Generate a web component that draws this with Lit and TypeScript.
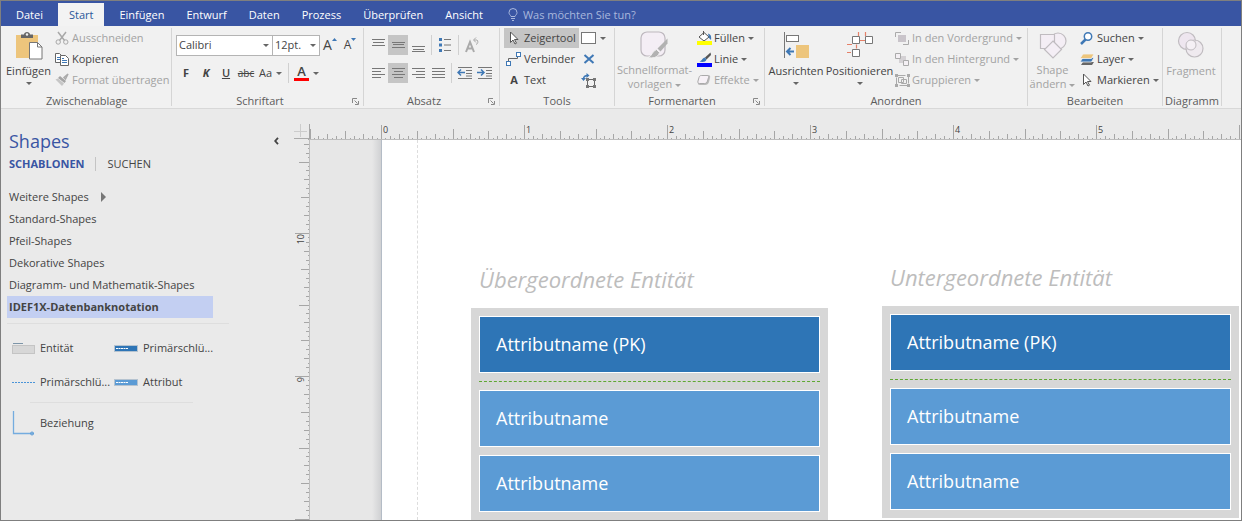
import { LitElement, html, svg, css, nothing } from "lit";
import type { TemplateResult } from "lit";
import { customElement, state } from "lit/decorators.js";
import { classMap } from "lit/directives/class-map.js";

const pic = (w: number, h: number, body: TemplateResult) =>
  html`<svg width=${w} height=${h} viewBox="0 0 ${w} ${h}" fill="none" aria-hidden="true">${body}</svg>`;

const chevron = pic(6, 3, svg`<path d="M0 0h6L3 3z" fill="currentColor"/>`);

const bars = (rows: number[][]) =>
  pic(14, 14, svg`${rows.map(([x, y, w]) => svg`<path d="M${x} ${y + 0.5}h${w}" stroke="#777"/>`)}`);

const brush = (color: string) => svg`
  <path d="M13.500 0.500L8 5.500l1.500 2L14 3z" fill="#555"/>
  <path d="M8 5.500C5 6 5.500 8.500 2.500 9.500 5.500 10.500 9 10 9.500 7.500z" fill=${color}/>`;

const icons: Record<string, TemplateResult> = {
  paste: pic(28, 30, svg`
    <path d="M1 4h22v23H1z" fill="#edc57c"/>
    <path d="M6 3.500h3C9 0 15 0 15 3.500h3V7H6z" fill="#666"/><circle cx="12" cy="3.500" r="1.200" fill="#f1f1f1"/>
    <path d="M14.500 11.500h8l4.500 4.500v12H14.500z" fill="#fff" stroke="#777"/><path d="M22.500 11.500V16H27" stroke="#777"/>`),
  cut: pic(14, 14, svg`
    <path d="M3 1l6.500 8.500M11 1L4.500 9.500" stroke="#a8a8a8" stroke-width="1.500"/>
    <circle cx="3.200" cy="11" r="2.200" stroke="#a8a8a8"/><circle cx="10.800" cy="11" r="2.200" stroke="#a8a8a8"/>`),
  copy: pic(14, 14, svg`
    <path d="M.5 1.500h4l2 2v7h-6z" fill="#fff" stroke="#666"/><path d="M2 5.500h3M2 7.500h3" stroke="#3f78b5"/>
    <path d="M5.500 3.500h5l3 3v7h-8z" fill="#fff" stroke="#666"/><path d="M7 8.500h5M7 10.500h5M7 6.500h2" stroke="#3f78b5"/>`),
  painter: pic(14, 14, svg`
    <path d="M13 1L9 4.500l1.500 1.500z" stroke="#aaa" stroke-width="1.500"/>
    <path d="M5 3l6 5-1.500 2-6.500-5z" fill="#a5a5a5"/><path d="M3 5.500L.5 6.500 7 13l2-2.500z" fill="#c6c6c6"/>`),
  cursor: pic(14, 14, svg`<path d="M3.500 1v10.500L6 9l2 4 1.500-.8L7.500 8.500H11z" fill="#fff" stroke="#555"/>`),
  connector: pic(16, 14, svg`
    <path d="M2.500 9.500V6.500h9V4" stroke="#666"/>
    <rect x=".5" y="9.500" width="4" height="4" fill="#fff" stroke="#3f78b5"/>
    <rect x="10.500" y=".5" width="4" height="4" fill="#fff" stroke="#3f78b5"/>`),
  rect: pic(15, 12, svg`<rect x=".5" y=".5" width="14" height="11" fill="#fff" stroke="#777"/>`),
  cross: pic(12, 10, svg`<path d="M1.500 1l9 8M10.500 1l-9 8" stroke="#3f78b5" stroke-width="2"/>`),
  points: pic(16, 15, svg`
    <path d="M2.500 6C2.500 3 4 2.500 7 2.500" stroke="#3f78b5" stroke-width="1.500"/>
    <path d="M0 5h5L2.500 8zM5.500 0l3 2.500-3 2.500z" fill="#3f78b5"/>
    <rect x="6.500" y="6.500" width="7" height="7" stroke="#666"/>
    <path d="M5 5h3v3H5zM12 5h3v3h-3zM5 12h3v3H5zM12 12h3v3h-3z" fill="#777"/>`),
  quick: pic(30, 30, svg`
    <rect x="1" y="1" width="24" height="24" rx="6" fill="#f4eef5" stroke="#bdb8be" stroke-width="1.200"/>
    <path d="M27.500 7.500v5l-7 8-3-3z" fill="#b2b2b2"/>
    <path d="M16.500 18.500l3 3C18 27 12 27.500 8 26.500c4-1 4-6.500 8.500-8z" fill="#b2b2b2" stroke="#f1f1f1"/>`),
  fill: pic(15, 14, svg`
    <path d="M6.500 0v4M2 6l5-4.500 5 4.500-5 4z" stroke="#555" fill="#fff"/>
    <path d="M11 2.500c3 1 3.500 3 3 6.500l-2-2z" fill="#3f78b5"/><path d="M0 10h15v4H0z" fill="#ff0"/>`),
  line: pic(15, 15, svg`${brush("#3f78b5")}<path d="M0 11h15v4H0z" fill="#00f"/>`),
  effects: pic(14, 12, svg`
    <path d="M4.500 1h6.500c2 0 2.500 1 2 3l-1 4c-.5 2-2 3-4 3H3C1 11 .500 10 1 8" fill="#bbb"/>
    <path d="M4.500 1.500h5.500c1.500 0 2 .5 1.500 2L10.500 7C10 8.500 9 9.500 7.500 9.500H2.500C1 9.500.5 8.500 1 7l1-3.500C2.500 2 3 1.500 4.500 1.500z" fill="#f6f1f6" stroke="#aaa"/>`),
  align: pic(26, 28, svg`
    <path d="M1.500 1v26" stroke="#777"/><rect x="3.500" y="4.500" width="12" height="6" fill="#fff" stroke="#777"/>
    <path d="M13 14h13v13H13z" fill="#edc57c"/>
    <path d="M4 20.500h7M7.500 17L4 20.500 7.500 24" stroke="#3f78b5" stroke-width="2"/>`),
  position: pic(28, 28, svg`
    <path d="M12.500 1v4M19.500 1v4M14 9.500h5M10.500 13.500v4M1 13.500h5M1 21.500h4" stroke="#e58068" stroke-width="1.200"/>
    <path d="M6.500 5.500h7v7h-7zM19.500 5.500h7v7h-7zM6.500 18.500h7v7h-7z" fill="#fff" stroke="#777"/>`),
  front: pic(14, 13, svg`
    <path d="M.5 5V.5H6M13.500 8v4.500H8" stroke="#aaa"/><path d="M3 3h8v7H3z" fill="#c9c4ca"/>`),
  back: pic(14, 13, svg`
    <path d="M4 3h7v7H4z" fill="#d4d1d4"/>
    <path d="M.5.5h5v5h-5zM8.500 7.500h5v5h-5z" fill="#f4f0f4" stroke="#aaa"/>`),
  group: pic(15, 13, svg`
    <path d="M1.500 1.500h12v10h-12z" stroke="#aaa" stroke-dasharray="9 2"/>
    <path d="M3.500 3.500h5v5h-5zM6.500 5.500h5v4h-5z" stroke="#aaa"/>
    <path d="M0 0h3v3H0zM12 0h3v3h-3zM0 10h3v3H0zM12 10h3v3h-3z" fill="#aaa"/>`),
  shape: pic(28, 28, svg`
    <circle cx="19" cy="10" r="8" fill="#f4eef5" stroke="#c0bcc0" stroke-width="1.200"/>
    <path d="M1.500 3.500h14v14h-14z" fill="#f4eef5" stroke="#c0bcc0" stroke-width="1.200"/>
    <path d="M14 10l8.500 8.500L14 27l-8.500-8.500z" fill="#f4eef5" stroke="#c0bcc0" stroke-width="1.200"/>`),
  search: pic(14, 13, svg`
    <circle cx="8" cy="4.500" r="3.700" fill="#fff" stroke="#3f78b5" stroke-width="1.500"/>
    <path d="M5.500 7.500L1 12" stroke="#3f78b5" stroke-width="2.500"/>`),
  layer: pic(14, 13, svg`
    <path d="M1 12l2-3h11l-2 3z" fill="#666"/><path d="M0 9l3-4.500h11L11.500 9z" fill="#3f78b5" stroke="#f1f1f1" stroke-width=".8"/>
    <path d="M0 5.500L3 1h11l-2.500 4.500z" fill="#edc57c" stroke="#f1f1f1" stroke-width=".8"/>`),
  fragment: pic(28, 28, svg`
    <circle cx="10" cy="10" r="8.500" fill="#eee6ef" stroke="#c0bcc0" stroke-width="1.200"/>
    <circle cx="17.500" cy="17.500" r="8.500" fill="#eee6ef" fill-opacity=".6" stroke="#c0bcc0" stroke-width="1.200"/>
    <circle cx="14" cy="14" r="5" fill="#f5f0f5" stroke="#c0bcc0"/>`),
  top: bars([[1, 1, 13], [2, 4, 11], [1, 7, 13]]),
  middle: bars([[1, 4, 13], [2, 6, 11], [1, 9, 13]]),
  bottom: bars([[1, 8, 13], [2, 11, 11], [1, 13, 13]]),
  left: bars([[1, 2, 13], [1, 5, 9], [1, 8, 13], [1, 11, 9]]),
  center: bars([[1, 2, 13], [3, 5, 9], [1, 8, 13], [3, 11, 9]]),
  right: bars([[1, 2, 13], [5, 5, 9], [1, 8, 13], [5, 11, 9]]),
  justify: bars([[1, 2, 13], [1, 5, 13], [1, 8, 13], [1, 11, 13]]),
  bullets: pic(14, 14, svg`
    <path d="M1 0h3v3H1zM1 5.500h3v3H1zM1 11h3v3H1z" fill="#3f78b5"/>
    <path d="M6 1.500h7M6 7h7M6 12.500h7" stroke="#777"/>`),
  rotate: pic(14, 16, svg`
    <path d="M1 15L5 5 9 15M2.500 11.500h5" stroke="#aaa" stroke-width="2"/>
    <path d="M9 3h3c1.500 1 1 4-1 4.500M11 .5L8.500 3 11 5.500" stroke="#aaa"/>`),
  outdent: pic(16, 14, svg`
    <path d="M1 1.500h14M9 4.500h6M9 7.500h6M1 12.500h14M9 10h6" stroke="#777"/>
    <path d="M1 6.500h7M4 3.500l-3 3 3 3" stroke="#3f78b5" stroke-width="1.500"/>`),
  indent: pic(16, 14, svg`
    <path d="M1 1.500h14M9 4.500h6M9 7.500h6M1 12.500h14M9 10h6" stroke="#777"/>
    <path d="M0 6.500h6M4 3.500l3 3-3 3" stroke="#3f78b5" stroke-width="1.500"/>`),
  launcher: pic(7, 7, svg`<path d="M.5 5V.5H5M2.500 2.500l3 3M6.500 3v3.500H3" stroke="#888"/>`),
  bulb: pic(10, 13, svg`
    <path d="M3 8.500C2.500 7 1 6.500 1 4.500a4 4 0 0 1 8 0c0 2-1.500 2.500-2 4zM3 10.500h4M4 12.500h2" stroke="#a9b8dd"/>`),
};

interface Command { label: string; icon?: string; glyph?: string; menu?: boolean; off?: boolean; on?: boolean; }

/** One inch on the ruler, in pixels. */
const INCH = 143;

function ticks(origin: number, to: number) {
  const out: { at: number; size: number; inch: number | null }[] = [];
  for (let n = Math.ceil((-origin / INCH) * 32); ; n++) {
    const at = Math.round(origin + (n * INCH) / 32);
    if (at > to) return out;
    const size = n % 32 === 0 ? 14 : n % 16 === 0 ? 10 : n % 8 === 0 ? 8 : n % 4 === 0 ? 5 : n % 2 === 0 ? 3 : 1;
    out.push({ at, size, inch: n % 32 === 0 && at + 16 < to ? n / 32 : null });
  }
}

@customElement("app-root")
export class AppRoot extends LitElement {
  static styles = css`
    :host {
      display: grid;
      grid-template-rows: auto auto 1fr;
      min-height: 100vh;
      box-sizing: border-box;
      border: 1px solid #7f7f7f;
      background: #eaeaea;
      color: #444;
      font: 11px/16px "Open Sans", "Noto Sans", sans-serif;
      overflow: hidden;
    }
    * { box-sizing: border-box; }
    svg { display: block; flex: none; }
    button, select, input { font: inherit; color: inherit; margin: 0; padding: 0; border: 0; background: none; }
    button { display: flex; align-items: center; white-space: nowrap; }
    button:disabled { color: #a3a3a3; }

    .tabs { display: flex; height: 25px; padding: 2px 0 0 4px; background: #3955a3; color: #fff; }
    .tab { padding: 0 11px; }
    .tab.active { background: #f3f3f3; color: #2b579a; margin: 0 4px; }
    .ask { display: flex; align-items: center; gap: 5px; padding-left: 14px; flex: 1; }
    .ask input { width: 160px; outline: none; }
    .ask input::placeholder { color: #a9b8dd; opacity: 1; }

    .ribbon {
      display: grid;
      grid-template-columns: 171px 192px 136px 115px 150px 263px 135px 59px;
      padding: 2px 0;
      background: #f1f1f1;
      border-bottom: 1px solid #d8d8d8;
    }
    .group { display: grid; grid-template-rows: 63px 15px; border-right: 1px solid #d5d5d5; }
    .body { display: flex; }
    .body.indent { padding-left: 4px; }
    .body.stack { flex-direction: column; gap: 8px; padding: 7px 0 0 4px; }
    .caption { display: flex; color: #5c5c5c; line-height: 19px; }
    .caption span { flex: 1; text-align: center; }
    .caption button { width: 15px; padding-top: 6px; justify-content: center; }
    .column { display: grid; grid-template-rows: repeat(3, 20px); gap: 1px; align-content: start; justify-items: start; }
    .cmd { gap: 3px; height: 20px; padding: 0 3px; }
    .cmd .icon, .cmd .glyph { width: 14px; display: flex; justify-content: center; }
    .glyph { font-weight: 700; }
    .on { background: #c5c5c5; }
    .big { flex-direction: column; padding-top: 3px; line-height: 14px; text-align: center; }
    .big .icon { height: 33px; }
    .big .label { white-space: pre; }
    .big > svg { margin-top: 4px; }
    .big .label svg { display: inline-block; vertical-align: middle; }
    .w46 { width: 47px; } .w48 { width: 49px; } .w56 { width: 56px; }
    .w62 { width: 62px; } .w64 { width: 65px; } .w76 { width: 79px; }
    .row { display: flex; height: 20px; align-items: center; }
    .tool { width: 20px; height: 20px; justify-content: center; }
    .tool.wide { width: 29px; gap: 4px; }
    .bar { width: 1px; height: 20px; margin: 0 3px; background: #d0d0d0; }
    .combo { position: relative; display: flex; align-items: center; height: 21px; background: #fff; border: 1px solid #b4b4b4; }
    .combo.size { margin-left: -1px; }
    .combo select { appearance: none; width: 95px; height: 19px; padding-left: 2px; outline: none; }
    .combo.size select { width: 46px; }
    .combo svg { position: absolute; right: 3px; pointer-events: none; }
    svg { color: #666; }
    :disabled svg { color: #a3a3a3; }
    .b { font-weight: 700; } .i { font-weight: 700; font-style: italic; } .u { font-weight: 600; text-decoration: underline; }
    .s { text-decoration: line-through; font-size: 10px; }
    .grow { font-size: 14px; } .shrink { font-size: 12px; }
    .grow svg, .shrink svg { align-self: flex-start; margin-top: 3px; color: #3f78b5; }
    .swatch { border-bottom: 3px solid #f00; width: 15px; line-height: 13px; font-size: 13px; font-weight: 600; text-align: center; }

    .work { display: grid; grid-template-columns: 293px 15px 1fr; grid-template-rows: 30px 1fr; }
    .shapes { grid-row: 1 / 3; padding: 20px 0 0 6px; }
    .head { display: flex; justify-content: space-between; align-items: center; padding: 0 15px 0 2px; height: 24px; }
    h1 { margin: 0; font-size: 18px; font-weight: 400; line-height: 24px; color: #3955a3; }
    .switch { display: flex; height: 21px; padding: 1px 0 0 2px; }
    .switch .current { color: #3955a3; font-weight: 700; }
    .switch .rule { width: 1px; height: 14px; background: #c4c4c4; margin: 3px 11px; }
    .stencils { list-style: none; margin: 12px 0 0; padding: 0; width: 206px; }
    .stencils button { width: 100%; height: 22px; padding-left: 2px; gap: 12px; text-align: left; }
    .stencils .chosen { background: #c3cff2; font-weight: 700; }
    .divider { height: 1px; margin: 5px 65px 0 0; background: #dedede; }
    .divider.short { width: 163px; margin: 3px 0 0 23px; }
    .masters { display: grid; grid-template-columns: 102px 102px; grid-auto-rows: 34px; padding: 7px 0 0 5px; }
    .masters.last { padding-top: 3px; }
    .masters button { gap: 5px; }

    .corner, .ruler { display: flex; align-items: flex-end; overflow: hidden; }
    .ruler.side { align-items: flex-start; }
    .ruler { min-width: 0; contain: size; }
    .numeral { font-size: 9px; fill: #444; }
    .canvas {
      position: relative; display: flex; overflow: hidden; padding-left: 71px;
      background: linear-gradient(90deg, #e7e7e7 0, #e7e7e7 62px, #d0d1d3 71px);
      border-left: 1px solid #bdbdbd; border-top: 1px solid #bdbdbd;
    }
    .sheet { flex: 1; background: #fff; border-left: 1px solid #b4bcc6; padding-left: 35px; }
    .margin { height: 100%; width: 1px; border-left: 1px dashed #ddd; }
    .entity { position: absolute; width: 357px; margin: 0; }
    .parent { left: 161px; top: 124px; }
    .child { left: 572px; top: 122px; }
    figcaption { padding-left: 8px; font-size: 22px; line-height: 30px; font-style: italic; color: #bdbdbd; }
    .box { margin-top: 14px; padding: 8px; background: #d7d7d7; }
    .attr {
      height: 57px; padding: 0 16px 2px; display: flex; align-items: center; border: 1px solid #fff;
      background: #5b9bd5; color: #fff; font-size: 18px; line-height: 24px;
    }
    .attr.key { background: #2e75b6; }
    .attr + .attr { margin-top: 8px; }
    .keyline { border-top: 1px dashed #5fa832; margin: 8px 0; }
  `;

  @state() private view = { w: window.innerWidth, h: window.innerHeight };

  private measure = () => { this.view = { w: window.innerWidth, h: window.innerHeight }; };

  connectedCallback() {
    super.connectedCallback();
    window.addEventListener("resize", this.measure);
  }

  disconnectedCallback() {
    window.removeEventListener("resize", this.measure);
    super.disconnectedCallback();
  }

  private small(c: Command) {
    return html`<button class=${classMap({ cmd: true, on: !!c.on })} ?disabled=${!!c.off}>
      ${c.icon ? html`<span class="icon">${icons[c.icon]}</span>` : nothing}
      ${c.glyph ? html`<span class="glyph">${c.glyph}</span>` : nothing}
      <span>${c.label}</span>${c.menu ? chevron : nothing}
    </button>`;
  }

  private big(width: string, icon: string, label: string, menu: "below" | "inline" | "none", off = false) {
    return html`<button class="big ${width}" ?disabled=${off}>
      <span class="icon">${icons[icon]}</span>
      <span class="label">${label}${menu === "inline" ? html` ${chevron}` : nothing}</span>
      ${menu === "below" ? chevron : nothing}
    </button>`;
  }

  private tool(icon: string, name: string, on = false, off = false) {
    return html`<button class=${classMap({ tool: true, on })} aria-label=${name} ?disabled=${off}>${icons[icon]}</button>`;
  }

  private group(label: string, body: TemplateResult, launcher = false) {
    return html`<section class="group" aria-label=${label}>${body}
      <div class="caption"><span>${label}</span>${launcher ? html`<button aria-label="${label} öffnen">${icons.launcher}</button>` : nothing}</div>
    </section>`;
  }

  private entity(kind: string, title: string) {
    return html`<figure class="entity ${kind}">
      <figcaption>${title}</figcaption>
      <div class="box">
        <div class="attr key">Attributname (PK)</div>
        <div class="keyline"></div>
        <div class="attr">Attributname</div>
        <div class="attr">Attributname</div>
      </div>
    </figure>`;
  }

  private topRuler() {
    const length = Math.max(0, this.view.w - 310);
    return html`<svg width=${length} height="15">${ticks(72, length).map((t) => svg`
      <path d="M${t.at + 0.5} ${15 - t.size}V15" stroke="#a6a6a6"/>
      ${t.inch !== null ? svg`<text class="numeral" x=${t.at + 2} y="9">${t.inch}</text>` : nothing}`)}
      <path d="M.5 0V15" stroke="#a6a6a6"/></svg>`;
  }

  private sideRuler() {
    const length = Math.max(0, this.view.h - 140);
    return html`<svg width="15" height=${length}>${ticks(94, length).map((t) => svg`
      <path d="M${15 - t.size} ${t.at + 0.5}H15" stroke="#a6a6a6"/>
      ${t.inch !== null ? svg`<text class="numeral" text-anchor="end" transform="translate(10 ${t.at + 1}) rotate(-90)">${10 - t.inch}</text>` : nothing}`)}</svg>`;
  }

  render() {
    const tabs = ["Einfügen", "Entwurf", "Daten", "Prozess", "Überprüfen", "Ansicht"];
    const stencils = ["Standard-Shapes", "Pfeil-Shapes", "Dekorative Shapes", "Diagramm- und Mathematik-Shapes"];
    const plate = (fill: string) => pic(24, 7, svg`
      <rect x=".5" y=".5" width="23" height="6" fill=${fill} stroke="#b5c3d0"/><path d="M2 3.500h12" stroke="#fff" stroke-dasharray="2 .5"/>`);
    return html`
      <nav class="tabs">
        <button class="tab">Datei</button>
        <button class="tab active">Start</button>
        ${tabs.map((t) => html`<button class="tab">${t}</button>`)}
        <label class="ask">${icons.bulb}<input aria-label="Was möchten Sie tun?" placeholder="Was möchten Sie tun?"></label>
      </nav>

      <div class="ribbon">
        ${this.group("Zwischenablage", html`<div class="body indent">
          ${this.big("w46", "paste", "Einfügen", "below")}
          <div class="column">
            ${this.small({ icon: "cut", label: "Ausschneiden", off: true })}
            ${this.small({ icon: "copy", label: "Kopieren" })}
            ${this.small({ icon: "painter", label: "Format übertragen", off: true })}
          </div></div>`)}
        ${this.group("Schriftart", html`<div class="body stack">
          <div class="row">
            <div class="combo"><select aria-label="Schriftart"><option>Calibri</option></select>${chevron}</div>
            <div class="combo size"><select aria-label="Schriftgrad"><option>12pt.</option></select>${chevron}</div>
            <button class="tool grow">A${pic(5, 4, svg`<path d="M0 3h5L2.500 0z" fill="currentColor"/>`)}</button>
            <button class="tool shrink">A${pic(5, 4, svg`<path d="M0 0h5L2.500 3z" fill="currentColor"/>`)}</button>
          </div>
          <div class="row">
            <button class="tool b">F</button><button class="tool i">K</button>
            <button class="tool u">U</button><button class="tool s">abc</button>
            <button class="tool wide">Aa${chevron}</button>
            <span class="bar"></span>
            <button class="tool wide"><span class="swatch">A</span>${chevron}</button>
          </div></div>`, true)}
        ${this.group("Absatz", html`<div class="body stack">
          <div class="row">
            ${this.tool("top", "Oben")}${this.tool("middle", "Mitte", true)}${this.tool("bottom", "Unten")}
            <span class="bar"></span>${this.tool("bullets", "Aufzählung")}
            <span class="bar"></span>${this.tool("rotate", "Text drehen", false, true)}
          </div>
          <div class="row">
            ${this.tool("left", "Links")}${this.tool("center", "Zentriert", true)}${this.tool("right", "Rechts")}${this.tool("justify", "Blocksatz")}
            <span class="bar"></span>${this.tool("outdent", "Einzug verkleinern")}${this.tool("indent", "Einzug vergrößern")}
          </div></div>`, true)}
        ${this.group("Tools", html`<div class="body indent">
          <div class="column">
            ${this.small({ icon: "cursor", label: "Zeigertool", on: true })}
            ${this.small({ icon: "connector", label: "Verbinder" })}
            ${this.small({ glyph: "A", label: "Text" })}
          </div>
          <div class="column">
            <button class="tool wide" aria-label="Rechteck">${icons.rect}${chevron}</button>
            ${this.tool("cross", "Verbindungspunkt")}
            ${this.tool("points", "Textblock")}
          </div></div>`)}
        ${this.group("Formenarten", html`<div class="body">
          ${this.big("w76", "quick", "Schnellformat-\nvorlagen", "inline", true)}
          <div class="column">
            ${this.small({ icon: "fill", label: "Füllen", menu: true })}
            ${this.small({ icon: "line", label: "Linie", menu: true })}
            ${this.small({ icon: "effects", label: "Effekte", menu: true, off: true })}
          </div></div>`, true)}
        ${this.group("Anordnen", html`<div class="body">
          ${this.big("w62", "align", "Ausrichten", "below")}
          ${this.big("w64", "position", "Positionieren", "below")}
          <div class="column">
            ${this.small({ icon: "front", label: "In den Vordergrund", menu: true, off: true })}
            ${this.small({ icon: "back", label: "In den Hintergrund", menu: true, off: true })}
            ${this.small({ icon: "group", label: "Gruppieren", menu: true, off: true })}
          </div></div>`)}
        ${this.group("Bearbeiten", html`<div class="body">
          ${this.big("w48", "shape", "Shape\nändern", "inline", true)}
          <div class="column">
            ${this.small({ icon: "search", label: "Suchen", menu: true })}
            ${this.small({ icon: "layer", label: "Layer", menu: true })}
            ${this.small({ icon: "cursor", label: "Markieren", menu: true })}
          </div></div>`)}
        ${this.group("Diagramm", html`<div class="body">${this.big("w56", "fragment", "Fragment", "none", true)}</div>`)}
      </div>

      <main class="work">
        <aside class="shapes">
          <div class="head"><h1>Shapes</h1>
            <button aria-label="Minimieren">${pic(5, 8, svg`<path d="M4 .8L1.200 4 4 7.200" stroke="#444" stroke-width="1.800"/>`)}</button></div>
          <div class="switch"><button class="current">SCHABLONEN</button><span class="rule"></span><button>SUCHEN</button></div>
          <ul class="stencils">
            <li><button>Weitere Shapes ${pic(5, 10, svg`<path d="M0 0v10l5-5z" fill="#777"/>`)}</button></li>
            ${stencils.map((s) => html`<li><button>${s}</button></li>`)}
            <li><button class="chosen">IDEF1X-Datenbanknotation</button></li>
          </ul>
          <div class="divider"></div>
          <div class="masters">
            <button>${pic(23, 11, svg`<path d="M1 .5h10" stroke="#7d95a8"/><rect x=".5" y="2.500" width="22" height="8" fill="#d7d7d7" stroke="#c4c4c4"/>`)}Entität</button>
            <button>${plate("#2e75b6")}Primärschlü...</button>
            <button>${pic(23, 3, svg`<path d="M0 1.500h23" stroke="#4a94d8" stroke-dasharray="2 1"/>`)}Primärschlü...</button>
            <button>${plate("#5b9bd5")}Attribut</button>
          </div>
          <div class="divider short"></div>
          <div class="masters last">
            <button>${pic(23, 25, svg`<path d="M1.500 0v22.500H22" stroke="#74acdf" stroke-width="1.300"/><circle cx="20" cy="22.500" r="1.500" stroke="#5b9bd5"/>`)}Beziehung</button>
          </div>
        </aside>
        <div class="corner">${pic(15, 15, svg`<path d="M0 7.500h13M6.500 0v13" stroke="#ccc"/><path d="M0 14.500h15" stroke="#aaa"/>`)}</div>
        <div class="ruler top">${this.topRuler()}</div>
        <div class="ruler side">${this.sideRuler()}</div>
        <div class="canvas">
          <div class="sheet"><div class="margin"></div></div>
          ${this.entity("parent", "Übergeordnete Entität")}
          ${this.entity("child", "Untergeordnete Entität")}
        </div>
      </main>`;
  }
}
